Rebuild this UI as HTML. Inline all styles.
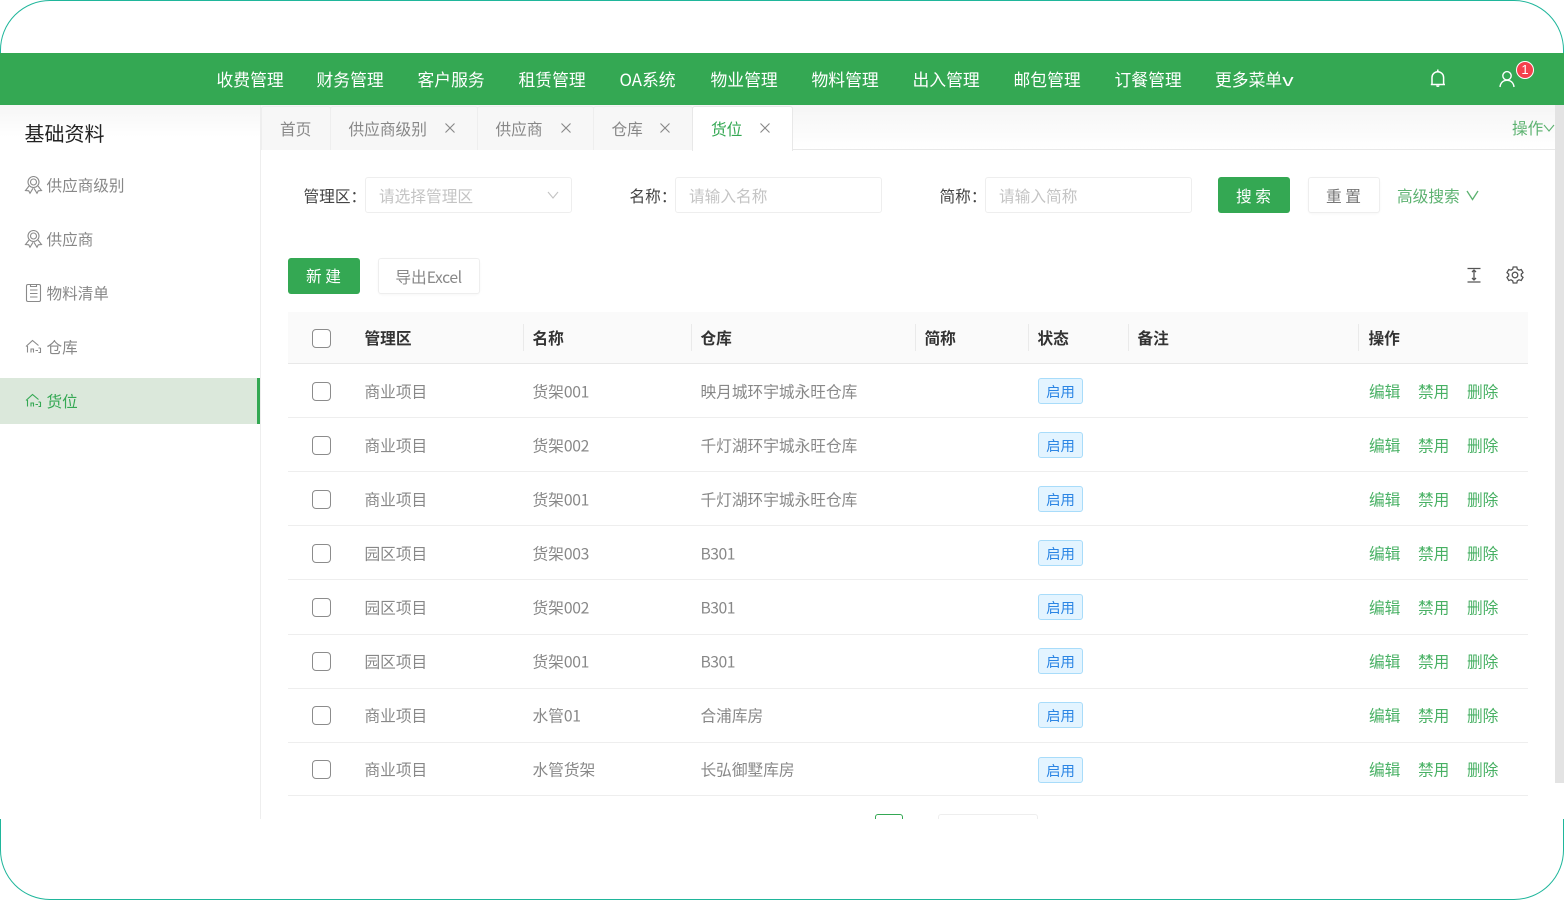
<!DOCTYPE html>
<html lang="zh-CN"><head><meta charset="utf-8"><title>货位</title>
<style>
*{box-sizing:border-box}
html,body{margin:0;padding:0;width:1564px;height:900px;overflow:hidden;background:#fff}
body{position:relative;font-family:"Noto Sans CJK SC","Liberation Sans",sans-serif;font-size:16px;color:#888}
.a{position:absolute;white-space:nowrap;line-height:24px}
.n{letter-spacing:-.35px}
.frame{position:absolute;left:0;top:0;width:1564px;height:900px;border:1.2px solid #1fb69b;border-radius:50px}
.hdr{position:absolute;left:0;top:53px;width:1564px;height:52px;background:#34a853}
.hdr .a{color:#fff;font-size:16.8px;top:13.5px;line-height:24px;margin-left:-.5px}
.body{position:absolute;left:0;top:105px;width:1564px;height:714px;background:#fff;overflow:hidden}
.side{position:absolute;left:0;top:0;width:261px;height:714px;border-right:1px solid #eee;background:linear-gradient(#f6f6f6,#fff 32px)}
.tabs{position:absolute;left:261px;top:0;width:1294px;height:45px;background:linear-gradient(#f5f5f5,#fff);border-bottom:1px solid #e8e8e8}
.tab{position:absolute;top:1px;height:44px;background:#f7f7f7;border:1px solid #eee;border-bottom:0;border-radius:3px 3px 0 0;color:#888;font-size:15.7px;line-height:43px}
.tab.on{background:#fff;color:#34a853;height:45px;border-color:#e8e8e8}
.x{position:absolute;top:10.5px;width:20px;height:20px}
.inp{position:absolute;top:72px;height:36px;width:207px;border:1px solid #eee;border-radius:3px;color:#c4c4c4;font-size:15.7px;line-height:36px;padding-left:13px;background:#fff}
.lbl{position:absolute;top:79px;line-height:24px;color:#444;font-size:15.7px;white-space:nowrap;margin-left:-.5px}
.btn{position:absolute;border-radius:3px;text-align:center;font-size:15.7px;white-space:nowrap}
.g{background:#34a853;color:#fff}
.w{background:#fff;border:1px solid #eee;color:#888;box-shadow:0 1px 2px rgba(0,0,0,.03)}
.th{position:absolute;left:288px;top:207px;width:1240px;height:52px;background:#fafafa;border-bottom:1px solid #e8e8e8}
.hd{position:absolute;top:221px;font-weight:700;color:#333;font-size:15.7px;line-height:24px;white-space:nowrap;margin-left:-.5px}
.sep{position:absolute;top:219px;width:1px;height:27px;background:#eaeaea}
.line{position:absolute;left:288px;width:1240px;height:1px;background:#eeeeee}
.cb{position:absolute;left:312px;width:19px;height:19px;border:1px solid #8c8c8c;border-radius:4px;background:#fff}
.c{position:absolute;white-space:nowrap;font-size:15.7px;line-height:24px;color:#888;transform:translate(-.5px,-.5px)}
.tag{position:absolute;left:1038px;width:45px;height:26px;background:#e3f4ff;border:1px solid #a8dcfa;border-radius:3px;color:#2b85e4;font-size:14.4px;line-height:25px;text-align:center}
.op{position:absolute;white-space:nowrap;font-size:15.7px;line-height:24px;color:#34a853;opacity:.9;transform:translate(0,-.5px)}
.mi{position:absolute;left:46.5px;font-size:15.6px;line-height:24px;white-space:nowrap;color:#888;margin-top:-1px}
.ic{position:absolute;left:24px;width:20px;height:20px;fill:none;stroke:#8a8a8a;stroke-width:1.1}
</style></head><body>
<div class="frame"></div>
<div class="hdr">
<span class="a" style="left:217px">收费管理</span><span class="a" style="left:317px">财务管理</span><span class="a" style="left:418px">客户服务</span><span class="a" style="left:519px">租赁管理</span><span class="a" style="left:620px">OA系统</span><span class="a" style="left:711px">物业管理</span><span class="a" style="left:812px">物料管理</span><span class="a" style="left:913px">出入管理</span><span class="a" style="left:1014px">邮包管理</span><span class="a" style="left:1115px">订餐管理</span><span class="a" style="left:1215.500px">更多菜单<span style="display:inline-block;transform:scaleX(1.350);transform-origin:0 50%">v</span></span>
<svg style="position:absolute;left:1428px;top:15px" width="20" height="22" viewBox="0 0 20 22" fill="none" stroke="#fff" stroke-width="1.5"><path d="M4 16V9.500a5.800 5.800 0 0 1 11.600 0V16M2.800 16.500H17"/><path d="M9.800 1.500v2M8.600 17.500a1.300 1.300 0 0 0 2.400 0"/></svg>
<svg style="position:absolute;left:1497px;top:15px" width="20" height="22" viewBox="0 0 20 22" fill="none" stroke="#fff" stroke-width="1.400"><circle cx="10" cy="7.800" r="4.200"/><path d="M3 19c.4-4 3-6.700 7-6.700s6.600 2.700 7 6.700"/></svg>
<div style="position:absolute;left:1516px;top:7.500px;width:18px;height:18px;border-radius:50%;background:#f5404c;border:1px solid #fff;color:#fff;font:13px/16px 'Liberation Sans',sans-serif;text-align:center">1</div>
</div>
<div class="body">
<div class="side">
<span class="a" style="left:24.500px;top:16px;font-size:20px;color:#222">基础资料</span>
<svg class="ic" style="top:70px" viewBox="0 0 20 20"><circle cx="9.500" cy="7" r="5.500"/><circle cx="9.500" cy="7" r="3"/><path d="M5 11l-3.500 4.500 3.200.3 1.300 2.500 3-5M14 11l3.500 4.500-3.200.3-1.300 2.500-3-5"/></svg>
<span class="mi" style="top:69px">供应商级别</span>
<svg class="ic" style="top:124px" viewBox="0 0 20 20"><circle cx="9.500" cy="7" r="5.500"/><circle cx="9.500" cy="7" r="3"/><path d="M5 11l-3.500 4.500 3.200.3 1.300 2.500 3-5M14 11l3.500 4.500-3.200.3-1.300 2.500-3-5"/></svg>
<span class="mi" style="top:123px">供应商</span>
<svg class="ic" style="top:178px" viewBox="0 0 20 20"><rect x="2.500" y="1.500" width="14" height="17" rx="1.500"/><path d="M6.500 1.500v2h6v-2M6 7h7.500M6 10.500h7.500M6 14h7.500"/></svg>
<span class="mi" style="top:177px">物料清单</span>
<svg class="ic" style="top:232px" viewBox="0 0 20 20"><path d="M2 9.500L8.500 3.500l6 5M3.500 9v6.500M7 15.500v-3.500h2.500v3.500M11.500 13.500h2.500M16.500 11h-2M16.500 11v4.500h-2"/></svg>
<span class="mi" style="top:231px">仓库</span>
<div style="position:absolute;left:0;top:273px;width:260px;height:46px;background:#dbe8db;border-right:3px solid #34a853"></div>
<svg class="ic" style="top:286px;stroke:#34a853" viewBox="0 0 20 20"><path d="M2 9.500L8.500 3.500l6 5M3.500 9v6.500M7 15.500v-3.500h2.500v3.500M11.500 13.500h2.500M16.500 11h-2M16.500 11v4.500h-2"/></svg>
<span class="mi" style="top:285px;color:#34a853">货位</span>
</div>
<div class="tabs"></div>
<div class="tab" style="left:261px;width:70px;padding-left:18px">首页</div>
<div class="tab" style="left:330px;width:148px;padding-left:17.500px">供应商级别<svg class="x" style="left:108.500px" viewBox="0 0 20 20" stroke="#888" stroke-width="1.100"><path d="M5.500 5.500l9 9M14.500 5.500l-9 9"/></svg></div>
<div class="tab" style="left:477px;width:117px;padding-left:17.500px">供应商<svg class="x" style="left:77.500px" viewBox="0 0 20 20" stroke="#888" stroke-width="1.100"><path d="M5.500 5.500l9 9M14.500 5.500l-9 9"/></svg></div>
<div class="tab" style="left:593px;width:100px;padding-left:17.500px">仓库<svg class="x" style="left:60.500px" viewBox="0 0 20 20" stroke="#888" stroke-width="1.100"><path d="M5.500 5.500l9 9M14.500 5.500l-9 9"/></svg></div>
<div class="tab on" style="left:692px;width:101px;padding-left:18px">货位<svg class="x" style="left:61.500px" viewBox="0 0 20 20" stroke="#888" stroke-width="1.100"><path d="M5.500 5.500l9 9M14.500 5.500l-9 9"/></svg></div>
<span class="a" style="left:1512px;top:11px;color:#5cb270;font-size:15.700px">操作</span>
<svg style="position:absolute;left:1543px;top:17px" width="12" height="12" viewBox="0 0 12 12" fill="none" stroke="#5cb270" stroke-width="1.100"><path d="M1 3l5 6 5-6"/></svg>
<div style="position:absolute;left:1555px;top:0;width:9px;height:678px;background:#e3e3e3"></div>
<span class="lbl" style="left:304px">管理区：</span>
<div class="inp" style="left:365px">请选择管理区<svg style="position:absolute;left:180px;top:10px" width="14" height="14" viewBox="0 0 14 14" fill="none" stroke="#c4c4c4" stroke-width="1.100"><path d="M2 4l5 6 5-6"/></svg></div>
<span class="lbl" style="left:630px">名称：</span>
<div class="inp" style="left:675px">请输入名称</div>
<span class="lbl" style="left:940px">简称：</span>
<div class="inp" style="left:985px">请输入简称</div>
<div class="btn g" style="left:1218px;top:72px;width:72px;height:36px;line-height:37px;text-indent:-1px">搜 索</div>
<div class="btn w" style="left:1308px;top:72px;width:72px;height:36px;line-height:36px;color:#777;text-indent:-1px">重 置</div>
<span class="a" style="left:1397px;top:79px;color:#5cb270;font-size:15.700px">高级搜索</span>
<svg style="position:absolute;left:1465px;top:84px" width="15" height="14" viewBox="0 0 15 14" fill="none" stroke="#5cb270" stroke-width="1.300"><path d="M2 2l5.500 8.500L13 2"/></svg>
<div class="btn g" style="left:288px;top:153px;width:72px;height:36px;line-height:36px;text-indent:-1px">新 建</div>
<div class="btn w" style="left:378px;top:153px;width:102px;height:36px;line-height:35px;text-indent:-1px">导出<span class="n" style="letter-spacing:-.4px">Excel</span></div>
<svg style="position:absolute;left:1466px;top:161px" width="16" height="18" viewBox="0 0 16 18" fill="none" stroke="#555" stroke-width="1.300"><path d="M1.500 2.500h13M1.500 16h13M8 4.500v9.500"/><path d="M6 6l2-2 2 2M6 12l2 2 2-2"/></svg>
<svg style="position:absolute;left:1505px;top:160px" width="20" height="20" viewBox="0 0 20 20" fill="none" stroke="#555" stroke-width="1.300"><path d="M8.200 2h3.600l.5 2.200 1.700 1 2.200-.7 1.800 3.100-1.700 1.500v1.800l1.700 1.500-1.800 3.100-2.200-.7-1.700 1-.5 2.200H8.200l-.5-2.200-1.700-1-2.200.7L2 12.400l1.700-1.500V9.100L2 7.600l1.800-3.100 2.200.7 1.700-1z"/><circle cx="10" cy="10" r="2.800"/></svg>
<div class="th"></div>
<div class="cb" style="top:224px"></div>
<span class="hd" style="left:365px">管理区</span><span class="hd" style="left:533px">名称</span><span class="hd" style="left:701px">仓库</span><span class="hd" style="left:925px">简称</span><span class="hd" style="left:1038px">状态</span><span class="hd" style="left:1138px">备注</span><span class="hd" style="left:1369px">操作</span>
<div class="sep" style="left:523px"></div><div class="sep" style="left:691px"></div><div class="sep" style="left:915px"></div><div class="sep" style="left:1028px"></div><div class="sep" style="left:1128px"></div><div class="sep" style="left:1358px"></div>

<div class="cb" style="top:277px"></div><span class="c" style="left:365px;top:275px">商业项目</span><span class="c" style="left:533px;top:275px">货架<span class="n">001</span></span><span class="c" style="left:701px;top:275px">映月城环宇城永旺仓库</span><div class="tag" style="top:273px">启用</div><span class="op" style="left:1369px;top:275px">编辑</span><span class="op" style="left:1418px;top:275px">禁用</span><span class="op" style="left:1467px;top:275px">删除</span><div class="line" style="top:312px"></div>
<div class="cb" style="top:331px"></div><span class="c" style="left:365px;top:329px">商业项目</span><span class="c" style="left:533px;top:329px">货架<span class="n">002</span></span><span class="c" style="left:701px;top:329px">千灯湖环宇城永旺仓库</span><div class="tag" style="top:327px">启用</div><span class="op" style="left:1369px;top:329px">编辑</span><span class="op" style="left:1418px;top:329px">禁用</span><span class="op" style="left:1467px;top:329px">删除</span><div class="line" style="top:366px"></div>
<div class="cb" style="top:385px"></div><span class="c" style="left:365px;top:383px">商业项目</span><span class="c" style="left:533px;top:383px">货架<span class="n">001</span></span><span class="c" style="left:701px;top:383px">千灯湖环宇城永旺仓库</span><div class="tag" style="top:381px">启用</div><span class="op" style="left:1369px;top:383px">编辑</span><span class="op" style="left:1418px;top:383px">禁用</span><span class="op" style="left:1467px;top:383px">删除</span><div class="line" style="top:420px"></div>
<div class="cb" style="top:439px"></div><span class="c" style="left:365px;top:437px">园区项目</span><span class="c" style="left:533px;top:437px">货架<span class="n">003</span></span><span class="c n" style="left:701px;top:437px;letter-spacing:-.5px">B301</span><div class="tag" style="top:435px">启用</div><span class="op" style="left:1369px;top:437px">编辑</span><span class="op" style="left:1418px;top:437px">禁用</span><span class="op" style="left:1467px;top:437px">删除</span><div class="line" style="top:474px"></div>
<div class="cb" style="top:493px"></div><span class="c" style="left:365px;top:491px">园区项目</span><span class="c" style="left:533px;top:491px">货架<span class="n">002</span></span><span class="c n" style="left:701px;top:491px;letter-spacing:-.5px">B301</span><div class="tag" style="top:489px">启用</div><span class="op" style="left:1369px;top:491px">编辑</span><span class="op" style="left:1418px;top:491px">禁用</span><span class="op" style="left:1467px;top:491px">删除</span><div class="line" style="top:529px"></div>
<div class="cb" style="top:547px"></div><span class="c" style="left:365px;top:545px">园区项目</span><span class="c" style="left:533px;top:545px">货架<span class="n">001</span></span><span class="c n" style="left:701px;top:545px;letter-spacing:-.5px">B301</span><div class="tag" style="top:543px">启用</div><span class="op" style="left:1369px;top:545px">编辑</span><span class="op" style="left:1418px;top:545px">禁用</span><span class="op" style="left:1467px;top:545px">删除</span><div class="line" style="top:583px"></div>
<div class="cb" style="top:601px"></div><span class="c" style="left:365px;top:599px">商业项目</span><span class="c" style="left:533px;top:599px">水管<span class="n">01</span></span><span class="c" style="left:701px;top:599px">合浦库房</span><div class="tag" style="top:597px">启用</div><span class="op" style="left:1369px;top:599px">编辑</span><span class="op" style="left:1418px;top:599px">禁用</span><span class="op" style="left:1467px;top:599px">删除</span><div class="line" style="top:637px"></div>
<div class="cb" style="top:655px"></div><span class="c" style="left:365px;top:653px">商业项目</span><span class="c" style="left:533px;top:653px">水管货架</span><span class="c" style="left:701px;top:653px">长弘御墅库房</span><div class="tag" style="top:652px">启用</div><span class="op" style="left:1369px;top:653px">编辑</span><span class="op" style="left:1418px;top:653px">禁用</span><span class="op" style="left:1467px;top:653px">删除</span><div class="line" style="top:690px"></div>
<div style="position:absolute;left:875px;top:709px;width:28px;height:20px;border:1px solid #34a853;border-radius:3px"></div>
<div style="position:absolute;left:938px;top:709px;width:100px;height:20px;border:1px solid #eee;border-radius:3px"></div>
</div>
</body></html>
